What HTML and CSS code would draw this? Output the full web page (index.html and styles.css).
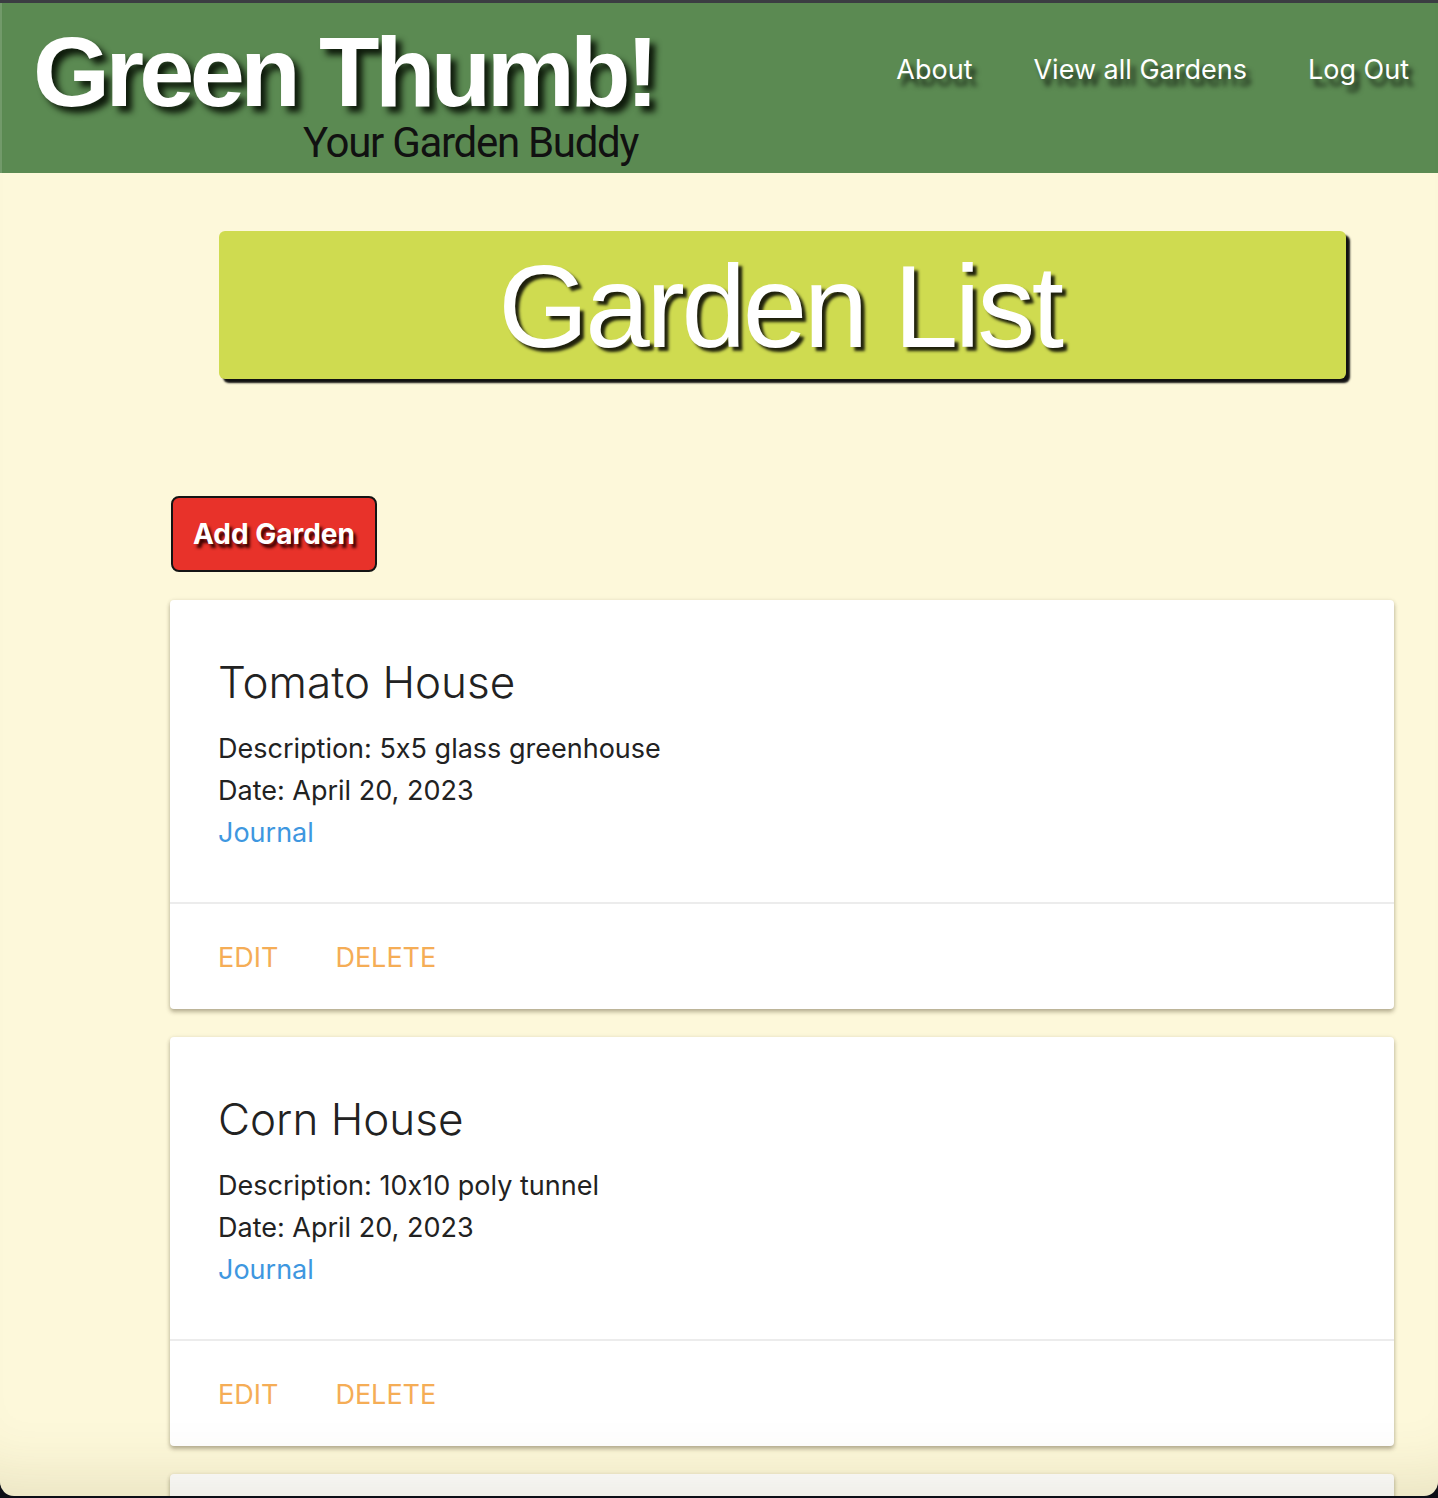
FILE: index.html
```html
<!DOCTYPE html>
<html lang="en">
<head>
<meta charset="utf-8">
<title>Green Thumb! - Garden List</title>
<link rel="stylesheet" href="styles.css">
</head>
<body>
<header class="site-header">
  <div class="brand">
    <div class="brand-title">Green Thumb!</div>
    <div class="brand-sub">Your Garden Buddy</div>
  </div>
  <nav class="nav">
    <a class="nav-link" href="#">About</a>
    <a class="nav-link" href="#">View all Gardens</a>
    <a class="nav-link" href="#">Log Out</a>
  </nav>
</header>
<main class="main">
  <div class="banner"><h1 class="banner-text">Garden List</h1></div>
  <button class="add-btn" type="button">Add Garden</button>
  <div class="card">
    <div class="card-content">
      <div class="card-title">Tomato House</div>
      <p class="card-line">Description: 5x5 glass greenhouse</p>
      <p class="card-line">Date: April 20, 2023</p>
      <a class="card-link" href="#">Journal</a>
    </div>
    <div class="card-action">
      <a class="action edit" href="#">Edit</a>
      <a class="action" href="#">Delete</a>
    </div>
  </div>
  <div class="card">
    <div class="card-content">
      <div class="card-title">Corn House</div>
      <p class="card-line">Description: 10x10 poly tunnel</p>
      <p class="card-line">Date: April 20, 2023</p>
      <a class="card-link" href="#">Journal</a>
    </div>
    <div class="card-action">
      <a class="action edit" href="#">Edit</a>
      <a class="action" href="#">Delete</a>
    </div>
  </div>
  <div class="card card-empty"></div>
</main>
<div class="frame"></div>
</body>
</html>
```
FILE: styles.css
```css
html, body {
  margin: 0;
  padding: 0;
}
body {
  background: #fdf8da;
  font-family: Inter, Roboto, "Liberation Sans", Arial, sans-serif;
  font-feature-settings: "calt" 0;
  color: #222;
  overflow: hidden;
  height: 1498px;
}
.site-header {
  margin-top: 3px;
  height: 170px;
  background: #5b8a52;
  display: flex;
  justify-content: space-between;
  align-items: flex-start;
  box-shadow: inset 2px 0 0 rgba(255,255,255,0.15);
}
.brand {
  padding: 19px 0 0 33px;
  display: flex;
  flex-direction: column;
}
.brand-title {
  font-family: "Liberation Sans", Arial, Helvetica, sans-serif;
  font-size: 99px;
  font-weight: 700;
  line-height: 100px;
  height: 100px;
  color: #fff;
  letter-spacing: -4.6px;
  text-shadow: 6px 6px 6px #0e1a0b;
}
.brand-sub {
  font-family: Roboto, "Liberation Sans", Arial, sans-serif;
  font-size: 42px;
  line-height: 42px;
  color: #111;
  letter-spacing: -1.3px;
  margin-left: 270px;
}
.nav {
  display: flex;
  gap: 61px;
  padding: 53px 29px 0 0;
}
.nav-link {
  font-size: 27px;
  line-height: 27px;
  color: #fff;
  text-decoration: none;
  text-shadow: 5px 7px 5px rgba(0,0,0,0.75);
}
.main {
  padding: 58px 44px 0 170px;
}
.banner {
  margin: 0 48px 0 49px;
  height: 148px;
  background: #cfdb50;
  border-radius: 6px;
  box-shadow: 4px 4px 2px #111;
  text-align: center;
  box-sizing: border-box;
  padding-top: 18px;
}
.banner-text {
  margin: 0;
  font-family: "Liberation Sans", Arial, Helvetica, sans-serif;
  font-size: 116px;
  line-height: 117px;
  font-weight: 400;
  color: #fff;
  letter-spacing: -3.4px;
  text-indent: -6px;
  text-shadow: 4px 4px 3px rgba(0,0,0,0.85);
}
.add-btn {
  display: block;
  margin: 117px 0 28px 1px;
  width: 206px;
  height: 76px;
  background: #e8322a;
  border: 2px solid #141414;
  border-radius: 8px;
  color: #fff;
  font-family: Inter, Roboto, "Liberation Sans", Arial, sans-serif;
  font-feature-settings: "calt" 0;
  font-size: 28px;
  font-weight: 700;
  text-shadow: 3px 4px 3px #3a0000;
  padding: 0;
}
.card {
  background: #fff;
  border-radius: 4px;
  box-shadow: 0 3px 4px rgba(60,50,20,0.35), 0 0 4px rgba(0,0,0,0.08);
  margin-bottom: 28px;
}
.card-content {
  padding: 54px 48px 48px 48px;
}
.card-title {
  font-size: 44px;
  line-height: 57px;
  font-weight: 300;
  color: #222;
  margin-bottom: 17px;
}
.card-line {
  margin: 0;
  font-size: 27px;
  line-height: 42px;
  color: #222;
}
.card-link {
  display: block;
  font-size: 27px;
  line-height: 42px;
  color: #3e97e0;
  text-decoration: none;
}
.card-action {
  border-top: 2px solid #ececec;
  padding: 34px 48px 31px 48px;
  display: flex;
}
.action {
  font-size: 27px;
  line-height: 40px;
  color: #f5ad56;
  text-transform: uppercase;
  text-decoration: none;
}
.action.edit {
  margin-right: 57px;
}
.card-empty {
  height: 200px;
}
.frame {
  position: fixed;
  left: 0;
  right: 0;
  top: 0;
  bottom: 2px;
  border-top: 3px solid #3b3d42;
  border-radius: 0 0 14px 14px;
  box-shadow: 0 0 0 40px #0c0e16, inset 0 -70px 60px -50px rgba(90,80,20,0.12);
  pointer-events: none;
}
```
